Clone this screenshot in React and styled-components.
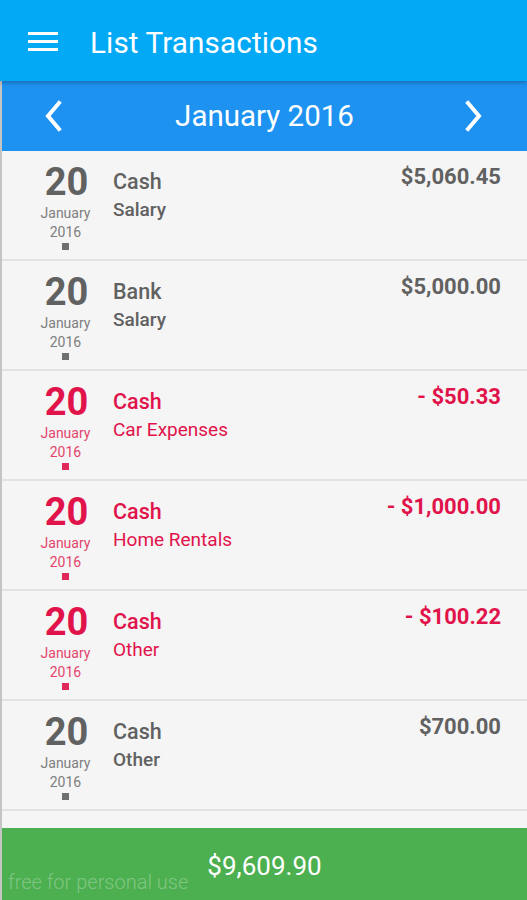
import styled, { createGlobalStyle } from 'styled-components';

const GlobalStyle = createGlobalStyle`
	html, body {
		margin: 0;
		padding: 0;
		background: #f5f5f5;
	}
	body {
		font-family: Roboto, 'Noto Sans', Arial, sans-serif;
	}
`;

const Page = styled.div`
	width: 527px;
	height: 900px;
	display: flex;
	flex-direction: column;
	overflow: hidden;
	position: relative;
	background: #f5f5f5;
`;

const Toolbar = styled.header`
	height: 81px;
	flex-shrink: 0;
	display: flex;
	align-items: center;
	background: #03a9f4;
	color: #fff;
	padding-left: 28px;
	box-sizing: border-box;
	position: relative;
	z-index: 2;
	box-shadow: 0 2px 4px rgba(0, 0, 0, 0.25);
`;

const Title = styled.h1`
	margin: 4px 0 0 32px;
	font-size: 29.7px;
	font-weight: 400;
	letter-spacing: 0.1px;
`;

const Body = styled.div`
	flex: 1;
	display: flex;
	flex-direction: column;
	border-left: 2px solid #c4c4c4;
	min-height: 0;
`;

const MonthBar = styled.div`
	height: 70px;
	flex-shrink: 0;
	display: flex;
	align-items: center;
	justify-content: space-between;
	padding: 0 42px 0 40px;
	background: #1e92f1;
	color: #fff;
`;

const MonthTitle = styled.div`
	font-size: 29.5px;
	font-weight: 400;
	padding-left: 2px;
`;

const NavButton = styled.button`
	border: none;
	background: none;
	padding: 0;
	width: 24px;
	height: 32px;
	display: flex;
	align-items: center;
	justify-content: center;
	cursor: pointer;
`;

const List = styled.div`
	flex: 1;
	overflow: hidden;
`;

const Row = styled.div`
	height: 110px;
	box-sizing: border-box;
	display: flex;
	padding: 10px 26px 0 0;
	border-bottom: 2px solid #e2e2e2;
	color: ${props => (props.$expense ? '#e0134b' : '#616161')};
`;

const DateCol = styled.div`
	width: 111px;
	display: flex;
	flex-direction: column;
	align-items: center;
	padding-left: 16px;
	box-sizing: border-box;
`;

const Day = styled.div`
	font-size: 38px;
	font-weight: 700;
	line-height: 43px;
	margin-left: 2px;
`;

const DateSmall = styled.div`
	font-size: 14px;
	line-height: 18.5px;
	opacity: 0.8;
`;

const Dot = styled.div`
	width: 7px;
	height: 7px;
	margin-top: 2px;
	background: currentColor;
	opacity: 0.9;
`;

const Info = styled.div`
	flex: 1;
	display: flex;
	flex-direction: column;
	padding-top: 7px;
`;

const Account = styled.div`
	font-size: 21.5px;
	font-weight: 500;
	line-height: 28px;
`;

const Category = styled.div`
	font-size: 19px;
	font-weight: ${props => (props.$expense ? 400 : 500)};
	line-height: 28px;
`;

const Amount = styled.div`
	font-size: 22px;
	font-weight: 700;
	line-height: 26px;
	padding-top: 3px;
	white-space: nowrap;
`;

const Footer = styled.footer`
	height: 72px;
	flex-shrink: 0;
	display: flex;
	align-items: center;
	justify-content: center;
	background: #4caf50;
	color: #fff;
	position: relative;
`;

const Total = styled.div`
	font-size: 26px;
	font-weight: 400;
	padding-top: 4px;
`;

const Watermark = styled.div`
	position: absolute;
	left: 6px;
	bottom: 6px;
	font-size: 20px;
	font-weight: 300;
	color: rgba(255, 255, 255, 0.3);
`;

function MenuIcon() {
	return (
		<svg width="30" height="22" viewBox="0 0 30 22">
			<rect x="0" y="2" width="30" height="3" fill="#fff" />
			<rect x="0" y="10" width="30" height="3" fill="#fff" />
			<rect x="0" y="18" width="30" height="3" fill="#fff" />
		</svg>
	);
}

function Chevron({ dir }) {
	const d = dir === 'left' ? 'M17 3 L6 16 L17 29' : 'M7 3 L18 16 L7 29';
	return (
		<svg width="24" height="32" viewBox="0 0 24 32">
			<path d={d} fill="none" stroke="#fff" strokeWidth="4" strokeLinecap="square" />
		</svg>
	);
}

const transactions = [
	{ account: 'Cash', category: 'Salary', amount: '$5,060.45', expense: false },
	{ account: 'Bank', category: 'Salary', amount: '$5,000.00', expense: false },
	{ account: 'Cash', category: 'Car Expenses', amount: '- $50.33', expense: true },
	{ account: 'Cash', category: 'Home Rentals', amount: '- $1,000.00', expense: true },
	{ account: 'Cash', category: 'Other', amount: '- $100.22', expense: true },
	{ account: 'Cash', category: 'Other', amount: '$700.00', expense: false }
];

function App() {
	return (
		<>
			<GlobalStyle />
			<Page>
				<Toolbar>
					<MenuIcon />
					<Title>List Transactions</Title>
				</Toolbar>
				<Body>
					<MonthBar>
						<NavButton>
							<Chevron dir="left" />
						</NavButton>
						<MonthTitle>January 2016</MonthTitle>
						<NavButton>
							<Chevron dir="right" />
						</NavButton>
					</MonthBar>
					<List>
						{transactions.map((t, index) => (
							<Row key={index} $expense={t.expense}>
								<DateCol>
									<Day>20</Day>
									<DateSmall>January</DateSmall>
									<DateSmall>2016</DateSmall>
									<Dot />
								</DateCol>
								<Info>
									<Account>{t.account}</Account>
									<Category $expense={t.expense}>{t.category}</Category>
								</Info>
								<Amount>{t.amount}</Amount>
							</Row>
						))}
					</List>
					<Footer>
						<Total>$9,609.90</Total>
						<Watermark>free for personal use</Watermark>
					</Footer>
				</Body>
			</Page>
		</>
	);
}

export default App;
